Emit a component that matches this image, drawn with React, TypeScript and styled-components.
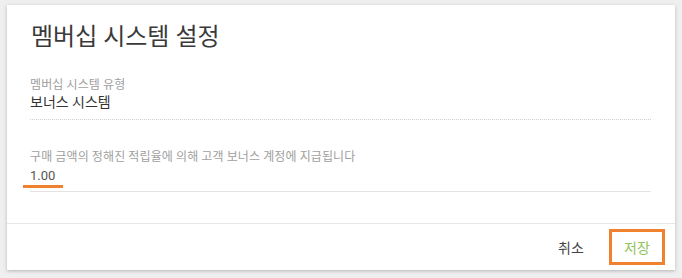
import React from "react";
import styled, { createGlobalStyle } from "styled-components";

const Global = createGlobalStyle`
  html, body { margin: 0; padding: 0; background: #efefef; }
  body { font-family: Roboto, "Noto Sans CJK KR", sans-serif; }
`;

const Page = styled.div`
  padding: 5px 7px 8px 7px;
  width: 682px;
  height: 278px;
  box-sizing: border-box;
`;

const Card = styled.div`
  background: #fff;
  height: 265px;
  box-shadow: 0 1px 4px rgba(0,0,0,0.18), 0 1px 2px rgba(0,0,0,0.08);
  display: flex;
  flex-direction: column;
`;

const Body = styled.div`
  flex: 1;
  padding: 16px 24px 0 23px;
`;

const Title = styled.h1`
  margin: 0 0 0 1px;
  font-size: 24px;
  font-weight: 400;
  color: #3a3a3a;
  line-height: 32px;
`;

const Field = styled.div<{ $top: number }>`
  margin-top: ${p => p.$top}px;
  display: flex;
  flex-direction: column;
`;

const Label = styled.div`
  font-size: 12px;
  color: #a0a0a0;
  line-height: 13px;
  letter-spacing: 0.1px;
`;

const Value = styled.div`
  font-size: 14px;
  color: #333;
  line-height: 16px;
  margin-top: 2px;
`;

const NumValue = styled(Value)`
  color: #555;
  font-size: 13px;
  margin-top: 4px;
`;

const DottedLine = styled.div`
  margin-top: 9px;
  border-bottom: 1px dotted #cfcfcf;
`;

const Focus = styled.div`
  margin: 1px 0 0 -7px;
  width: 40px;
  height: 3px;
  background: #f0812f;
`;

const SolidLine = styled.div`
  margin-top: 3px;
  border-bottom: 1px solid #e3e3e3;
`;

const Footer = styled.div`
  border-top: 1px solid #e8e8e8;
  height: 46px;
  display: flex;
  align-items: center;
  justify-content: flex-end;
  padding-right: 10px;
  gap: 10px;
`;

const Button = styled.button<{ $primary?: boolean; $focused?: boolean }>`
  font-family: Roboto, "Noto Sans CJK KR", sans-serif;
  font-size: 14px;
  background: transparent;
  cursor: pointer;
  color: ${p => (p.$primary ? "#8fc55a" : "#444")};
  border: 3px solid ${p => (p.$focused ? "#f0812f" : "transparent")};
  height: 36px;
  padding: 0;
  width: 56px;
`;

export default function App() {
  return (
    <>
      <Global />
      <Page>
        <Card>
          <Body>
            <Title>멤버십 시스템 설정</Title>
            <Field $top={26}>
              <Label>멤버십 시스템 유형</Label>
              <Value>보너스 시스템</Value>
              <DottedLine />
            </Field>
            <Field $top={31}>
              <Label>구매 금액의 정해진 적립율에 의해 고객 보너스 계정에 지급됩니다</Label>
              <NumValue>1.00</NumValue>
              <Focus />
              <SolidLine />
            </Field>
          </Body>
          <Footer>
            <Button>취소</Button>
            <Button $primary $focused>저장</Button>
          </Footer>
        </Card>
      </Page>
    </>
  );
}
